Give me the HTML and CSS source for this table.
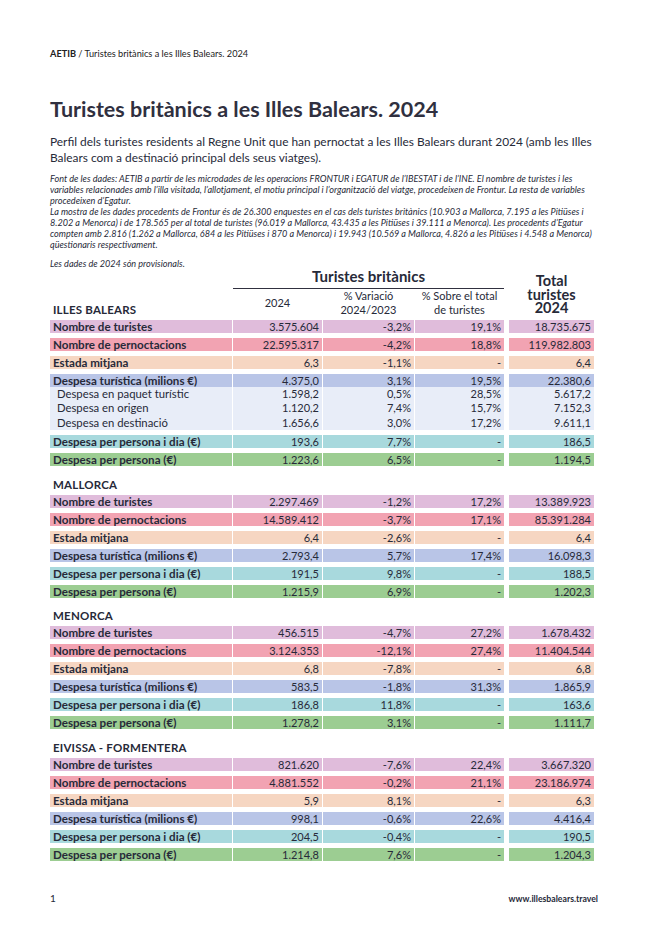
FILE: index.html
```html
<!DOCTYPE html>
<html lang="ca">
<head>
<meta charset="utf-8">
<title>Turistes britànics a les Illes Balears. 2024</title>
<link rel="stylesheet" href="styles.css">
</head>
<body>
<div class="page">
  <header class="running"><b>AETIB</b> / Turistes britànics a les Illes Balears. 2024</header>
  <h1 class="title">Turistes britànics a les Illes Balears. 2024</h1>
  <p class="intro">Perfil dels turistes residents al Regne Unit que han pernoctat a les Illes Balears durant 2024 (amb les Illes Balears com a destinació principal dels seus viatges).</p>
  <div class="notes">
    <p>Font de les dades: AETIB a partir de les microdades de les operacions FRONTUR i EGATUR de l’IBESTAT i de l’INE. El nombre de turistes i les<br>variables relacionades amb l’illa visitada, l’allotjament, el motiu principal i l’organització del viatge, procedeixen de Frontur. La resta de variables<br>procedeixen d’Egatur.</p>
    <p>La mostra de les dades procedents de Frontur és de 26.300 enquestes en el cas dels turistes britànics (10.903 a Mallorca, 7.195 a les Pitiüses i<br>8.202 a Menorca) i de 178.565 per al total de turistes (96.019 a Mallorca, 43.435 a les Pitiüses i 39.111 a Menorca). Les procedents d’Egatur<br>compten amb 2.816 (1.262 a Mallorca, 684 a les Pitiüses i 870 a Menorca) i 19.943 (10.569 a Mallorca, 4.826 a les Pitiüses i 4.548 a Menorca)<br>qüestionaris respectivament.</p>
    <p class="prov">Les dades de 2024 són provisionals.</p>
  </div>

  <div class="thead">
    <div class="group-title">Turistes britànics</div>
    <div class="total-title">Total<br>turistes<br>2024</div>
    <div class="sec-name first">ILLES BALEARS</div>
    <div class="sub one">2024</div>
    <div class="sub">% Variació<br>2024/2023</div>
    <div class="sub">% Sobre el total<br>de turistes</div>
  </div>

  <section class="block top">
    <div class="row tur"><span>Nombre de turistes</span><span>3.575.604</span><span>-3,2%</span><span>19,1%</span><span>18.735.675</span></div>
    <div class="row per"><span>Nombre de pernoctacions</span><span>22.595.317</span><span>-4,2%</span><span>18,8%</span><span>119.982.803</span></div>
    <div class="row est"><span>Estada mitjana</span><span>6,3</span><span>-1,1%</span><span>-</span><span>6,4</span></div>
    <div class="grp">
      <div class="row des"><span>Despesa turística (milions €)</span><span>4.375,0</span><span>3,1%</span><span>19,5%</span><span>22.380,6</span></div>
      <div class="row subrow"><span>Despesa en paquet turístic</span><span>1.598,2</span><span>0,5%</span><span>28,5%</span><span>5.617,2</span></div>
      <div class="row subrow"><span>Despesa en origen</span><span>1.120,2</span><span>7,4%</span><span>15,7%</span><span>7.152,3</span></div>
      <div class="row subrow"><span>Despesa en destinació</span><span>1.656,6</span><span>3,0%</span><span>17,2%</span><span>9.611,1</span></div>
    </div>
    <div class="row dia"><span>Despesa per persona i dia (€)</span><span>193,6</span><span>7,7%</span><span>-</span><span>186,5</span></div>
    <div class="row pp"><span>Despesa per persona (€)</span><span>1.223,6</span><span>6,5%</span><span>-</span><span>1.194,5</span></div>
  </section>

  <section class="block">
    <div class="sec-name">MALLORCA</div>
    <div class="row tur"><span>Nombre de turistes</span><span>2.297.469</span><span>-1,2%</span><span>17,2%</span><span>13.389.923</span></div>
    <div class="row per"><span>Nombre de pernoctacions</span><span>14.589.412</span><span>-3,7%</span><span>17,1%</span><span>85.391.284</span></div>
    <div class="row est"><span>Estada mitjana</span><span>6,4</span><span>-2,6%</span><span>-</span><span>6,4</span></div>
    <div class="row des"><span>Despesa turística (milions €)</span><span>2.793,4</span><span>5,7%</span><span>17,4%</span><span>16.098,3</span></div>
    <div class="row dia"><span>Despesa per persona i dia (€)</span><span>191,5</span><span>9,8%</span><span>-</span><span>188,5</span></div>
    <div class="row pp"><span>Despesa per persona (€)</span><span>1.215,9</span><span>6,9%</span><span>-</span><span>1.202,3</span></div>
  </section>

  <section class="block">
    <div class="sec-name">MENORCA</div>
    <div class="row tur"><span>Nombre de turistes</span><span>456.515</span><span>-4,7%</span><span>27,2%</span><span>1.678.432</span></div>
    <div class="row per"><span>Nombre de pernoctacions</span><span>3.124.353</span><span>-12,1%</span><span>27,4%</span><span>11.404.544</span></div>
    <div class="row est"><span>Estada mitjana</span><span>6,8</span><span>-7,8%</span><span>-</span><span>6,8</span></div>
    <div class="row des"><span>Despesa turística (milions €)</span><span>583,5</span><span>-1,8%</span><span>31,3%</span><span>1.865,9</span></div>
    <div class="row dia"><span>Despesa per persona i dia (€)</span><span>186,8</span><span>11,8%</span><span>-</span><span>163,6</span></div>
    <div class="row pp"><span>Despesa per persona (€)</span><span>1.278,2</span><span>3,1%</span><span>-</span><span>1.111,7</span></div>
  </section>

  <section class="block">
    <div class="sec-name">EIVISSA - FORMENTERA</div>
    <div class="row tur"><span>Nombre de turistes</span><span>821.620</span><span>-7,6%</span><span>22,4%</span><span>3.667.320</span></div>
    <div class="row per"><span>Nombre de pernoctacions</span><span>4.881.552</span><span>-0,2%</span><span>21,1%</span><span>23.186.974</span></div>
    <div class="row est"><span>Estada mitjana</span><span>5,9</span><span>8,1%</span><span>-</span><span>6,3</span></div>
    <div class="row des"><span>Despesa turística (milions €)</span><span>998,1</span><span>-0,6%</span><span>22,6%</span><span>4.416,4</span></div>
    <div class="row dia"><span>Despesa per persona i dia (€)</span><span>204,5</span><span>-0,4%</span><span>-</span><span>190,5</span></div>
    <div class="row pp"><span>Despesa per persona (€)</span><span>1.214,8</span><span>7,6%</span><span>-</span><span>1.204,3</span></div>
  </section>

  <footer class="foot">
    <span class="pnum">1</span>
    <span class="url">www.illesbalears.travel</span>
  </footer>
</div>
</body>
</html>
```

FILE: styles.css
```css
html, body {
  margin: 0;
  padding: 0;
  background: #ffffff;
}
body {
  font-family: Lato, "Open Sans", "Liberation Sans", sans-serif;
  color: #272a39;
}
.page {
  width: 548px;
  padding: 48px 49px 0 50px;
}
.running {
  font-size: 9.2px;
  line-height: 12px;
  color: #222;
}
.running b { font-weight: 700; }
.title {
  margin: 34px 0 0;
  font-size: 21.5px;
  line-height: 30px;
  font-weight: 700;
  color: #30303f;
}
.intro {
  margin: 10px 0 0;
  font-size: 11.9px;
  line-height: 16px;
  color: #272a39;
}
.notes {
  margin-top: 6.5px;
  font-size: 9.1px;
  line-height: 11px;
  font-style: italic;
  color: #272a39;
}
.notes p { margin: 0; }
.notes .prov { margin-top: 8px; }

/* table header */
.thead {
  display: grid;
  grid-template-columns: 182px 89px 91px 89px 89px;
  column-gap: 1px;
  margin-top: 0;
}
.group-title {
  grid-column: 2 / 5;
  grid-row: 1;
  text-align: center;
  font-weight: 700;
  font-size: 15px;
  line-height: 14px;
  padding-bottom: 5px;
  border-bottom: 1px solid #30303f;
}
.total-title {
  grid-column: 5;
  grid-row: 1 / 3;
  margin-left: 4px;
  margin-bottom: 2px;
  text-align: center;
  font-weight: 700;
  font-size: 14.5px;
  line-height: 13.5px;
  align-self: end;
}
.sub {
  grid-row: 2;
  text-align: center;
  font-size: 11px;
  line-height: 14px;
  align-self: start;
}
.sub.one { align-self: center; }
.sec-name {
  font-weight: 700;
  font-size: 11.5px;
  line-height: 14px;
  padding-left: 3px;
  letter-spacing: 0.2px;
  color: #272a39;
}
.sec-name.first {
  grid-column: 1;
  grid-row: 2;
  align-self: end;
}

/* body */
.block {
  display: flex;
  flex-direction: column;
  gap: 5px;
  margin-top: 3px;
}
.block.top { margin-bottom: 1.5px; }
.block + .block { margin-top: 11.5px; }
.block .sec-name { margin-bottom: -2px; }
.grp {
  display: flex;
  flex-direction: column;
}
.row {
  display: grid;
  grid-template-columns: 182px 89px 91px 89px 89px;
  column-gap: 1px;
  height: 13px;
  font-size: 11px;
  line-height: 13px;
}
.row > span {
  background: var(--bg);
  text-align: right;
  padding-right: 3px;
  white-space: nowrap;
  overflow: hidden;
}
.row > span:first-child {
  text-align: left;
  padding-left: 3px;
  font-weight: 700;
  font-size: 11.6px;
}
.row > span:last-child { margin-left: 4px; }
.tur { --bg: #e0bcdb; }
.per { --bg: #f2a3b2; }
.est { --bg: #f6d6c2; }
.des { --bg: #b9c5e7; }
.subrow {
  --bg: #e8edf8;
  height: 14.5px;
  line-height: 14.5px;
}
.subrow > span:first-child {
  font-weight: 400;
  padding-left: 7px;
  font-size: 11.3px;
}
.dia { --bg: #a8d9dd; }
.pp { --bg: #9ccd92; }

.foot {
  display: flex;
  justify-content: space-between;
  align-items: baseline;
  margin-top: 31px;
}
.pnum { font-size: 10px; }
.url { font-size: 8.7px; font-weight: 700; }
```
